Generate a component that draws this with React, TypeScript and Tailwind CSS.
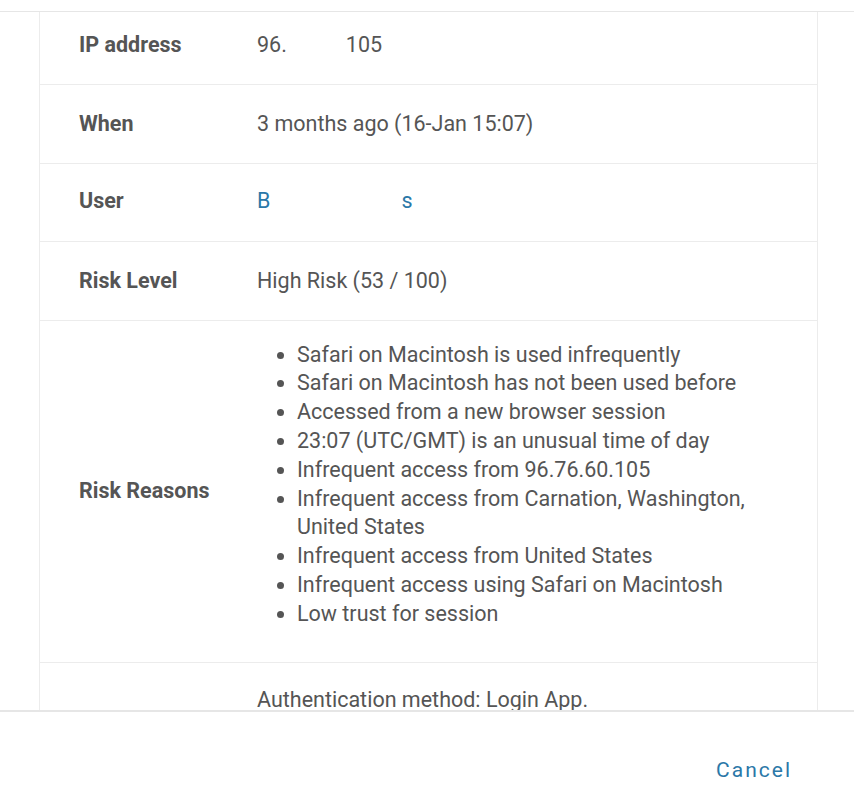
const reasons = [
  "Safari on Macintosh is used infrequently",
  "Safari on Macintosh has not been used before",
  "Accessed from a new browser session",
  "23:07 (UTC/GMT) is an unusual time of day",
  "Infrequent access from 96.76.60.105",
  "Infrequent access from Carnation, Washington, United States",
  "Infrequent access from United States",
  "Infrequent access using Safari on Macintosh",
  "Low trust for session",
];

const Label = ({ children }: { children: React.ReactNode }) => (
  <div className="w-[217px] shrink-0 pl-[39px] font-bold text-[#555]">{children}</div>
);

export default function App() {
  return (
    <div
      className="w-[854px] h-[799px] bg-white flex flex-col text-[21.5px] leading-[28.8px] text-[#555]"
      style={{ fontFamily: "Roboto, 'Liberation Sans', sans-serif" }}
    >
      <div className="h-[11px] shrink-0" />
      {/* scrolling details area */}
      <div className="h-[701px] shrink-0 overflow-hidden border-t border-b-2 border-[#e6e6e6]">
        <div className="ml-[39px] mr-[36px] border-l border-r border-[#ececec]">
          <div className="h-[73px] flex items-center pb-[5px] border-b border-[#ececec]">
            <Label>IP address</Label>
            <div className="flex">
              <span>96.</span>
              <span className="w-[59px]" />
              <span>105</span>
            </div>
          </div>
          <div className="h-[79px] flex items-center border-b border-[#ececec]">
            <Label>When</Label>
            <div>3 months ago (16-Jan 15:07)</div>
          </div>
          <div className="h-[78px] flex items-center pb-[2px] border-b border-[#ececec]">
            <Label>User</Label>
            <div className="flex text-[#2b78a8]">
              <span>B</span>
              <span className="w-[131px]" />
              <span>s</span>
            </div>
          </div>
          <div className="h-[79px] flex items-center border-b border-[#ececec]">
            <Label>Risk Level</Label>
            <div>High Risk (53 / 100)</div>
          </div>
          <div className="h-[342px] flex items-center border-b border-[#ececec]">
            <Label>Risk Reasons</Label>
            <ul className="list-disc pl-[40px] pr-[40px] pb-[14px] flex-1">
              {reasons.map((r) => (
                <li key={r} className="marker:text-[#555]">
                  {r}
                </li>
              ))}
            </ul>
          </div>
          <div className="h-[80px] flex pt-[23px]">
            <div className="w-[217px] shrink-0" />
            <div>Authentication method: Login App.</div>
          </div>
        </div>
      </div>
      {/* footer */}
      <div className="flex-1 flex justify-end items-start pt-[44px] pr-[62px]">
        <button className="text-[21px] leading-[28px] tracking-[2px] text-[#2b78a8]">
          Cancel
        </button>
      </div>
    </div>
  );
}
